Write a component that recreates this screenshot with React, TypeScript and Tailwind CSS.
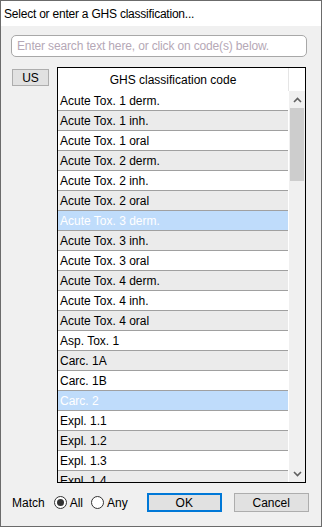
import React from "react";

const rows: { t: string; sel?: boolean }[] = [
  { t: "Acute Tox. 1 derm." },
  { t: "Acute Tox. 1 inh." },
  { t: "Acute Tox. 1 oral" },
  { t: "Acute Tox. 2 derm." },
  { t: "Acute Tox. 2 inh." },
  { t: "Acute Tox. 2 oral" },
  { t: "Acute Tox. 3 derm.", sel: true },
  { t: "Acute Tox. 3 inh." },
  { t: "Acute Tox. 3 oral" },
  { t: "Acute Tox. 4 derm." },
  { t: "Acute Tox. 4 inh." },
  { t: "Acute Tox. 4 oral" },
  { t: "Asp. Tox. 1" },
  { t: "Carc. 1A" },
  { t: "Carc. 1B" },
  { t: "Carc. 2", sel: true },
  { t: "Expl. 1.1" },
  { t: "Expl. 1.2" },
  { t: "Expl. 1.3" },
  { t: "Expl. 1.4" },
];

export default function App() {
  return (
    <div
      className="w-[322px] h-[527px] flex flex-col border border-[#6b6b6b] bg-[#f0f0f0] overflow-hidden text-[12px] text-black"
      style={{ fontFamily: '"Liberation Sans", Arial, sans-serif' }}
    >
      <div className="h-[25px] bg-white flex items-center pl-[3px] shrink-0 tracking-[-0.22px]">
        Select or enter a GHS classification...
      </div>
      <div className="flex-1 flex flex-col pl-[10px] pt-[9px]">
        <div className="w-[296px] h-[22px] border border-[#a8a8a8] rounded-[5px] bg-white flex items-center pl-[5px] text-[#b5a8b6] tracking-[-0.15px]">
          Enter search text here, or click on code(s) below.
        </div>
        <div className="flex mt-[10px]">
          <div className="mt-[2px] ml-[1px] w-[37px] h-[17px] bg-[#e1e1e1] border border-[#adadad] flex items-center justify-center">
            US
          </div>
          <div className="ml-[8px] w-[249px] h-[416px] border border-black bg-white flex flex-col overflow-hidden">
            <div className="h-[23px] flex shrink-0">
              <div className="w-[230px] flex items-center justify-center">GHS classification code</div>
              <div className="w-[1px] bg-[#e5e5e5]" />
            </div>
            <div className="flex flex-1 overflow-hidden">
              <div className="w-[230px] flex flex-col">
                {rows.map((r, i) => (
                  <div
                    key={r.t}
                    className={`h-[20px] shrink-0 border-b border-[#a0a0a0] flex items-center pl-[2px] ${
                      r.sel ? "bg-[#bfdcfb] text-white" : i % 2 === 0 ? "bg-white" : "bg-[#ebebeb]"
                    }`}
                  >
                    {r.t}
                  </div>
                ))}
              </div>
              <div className="w-[1px] bg-white" />
              <div className="w-[16px] bg-[#f0f0f0] flex flex-col">
                <div className="h-[17px] flex items-center justify-center">
                  <svg width="9" height="6" viewBox="0 0 9 6">
                    <path d="M1 5 L4.5 1.5 L8 5" fill="none" stroke="#606060" strokeWidth="1.6" />
                  </svg>
                </div>
                <div className="h-[73px] bg-[#cdcdcd] mx-[1px]" />
                <div className="flex-1" />
                <div className="h-[17px] flex items-center justify-center">
                  <svg width="9" height="6" viewBox="0 0 9 6">
                    <path d="M1 1 L4.5 4.5 L8 1" fill="none" stroke="#606060" strokeWidth="1.6" />
                  </svg>
                </div>
              </div>
            </div>
          </div>
        </div>
        <div className="flex items-center mt-[10px] h-[19px]">
          <span className="ml-[1px]">Match</span>
          <span className="ml-[9px] w-[13px] h-[13px] rounded-full border border-[#333] bg-white flex items-center justify-center">
            <span className="w-[7px] h-[7px] rounded-full bg-[#333]" />
          </span>
          <span className="ml-[3px]">All</span>
          <span className="ml-[8px] w-[13px] h-[13px] rounded-full border border-[#333] bg-white" />
          <span className="ml-[3px]">Any</span>
          <div className="ml-[19px] w-[75px] h-[19px] border-2 border-[#0078d7] bg-[#e1e1e1] flex items-center justify-center">
            OK
          </div>
          <div className="ml-[12px] w-[75px] h-[19px] border border-[#adadad] bg-[#e1e1e1] flex items-center justify-center">
            Cancel
          </div>
        </div>
      </div>
    </div>
  );
}
